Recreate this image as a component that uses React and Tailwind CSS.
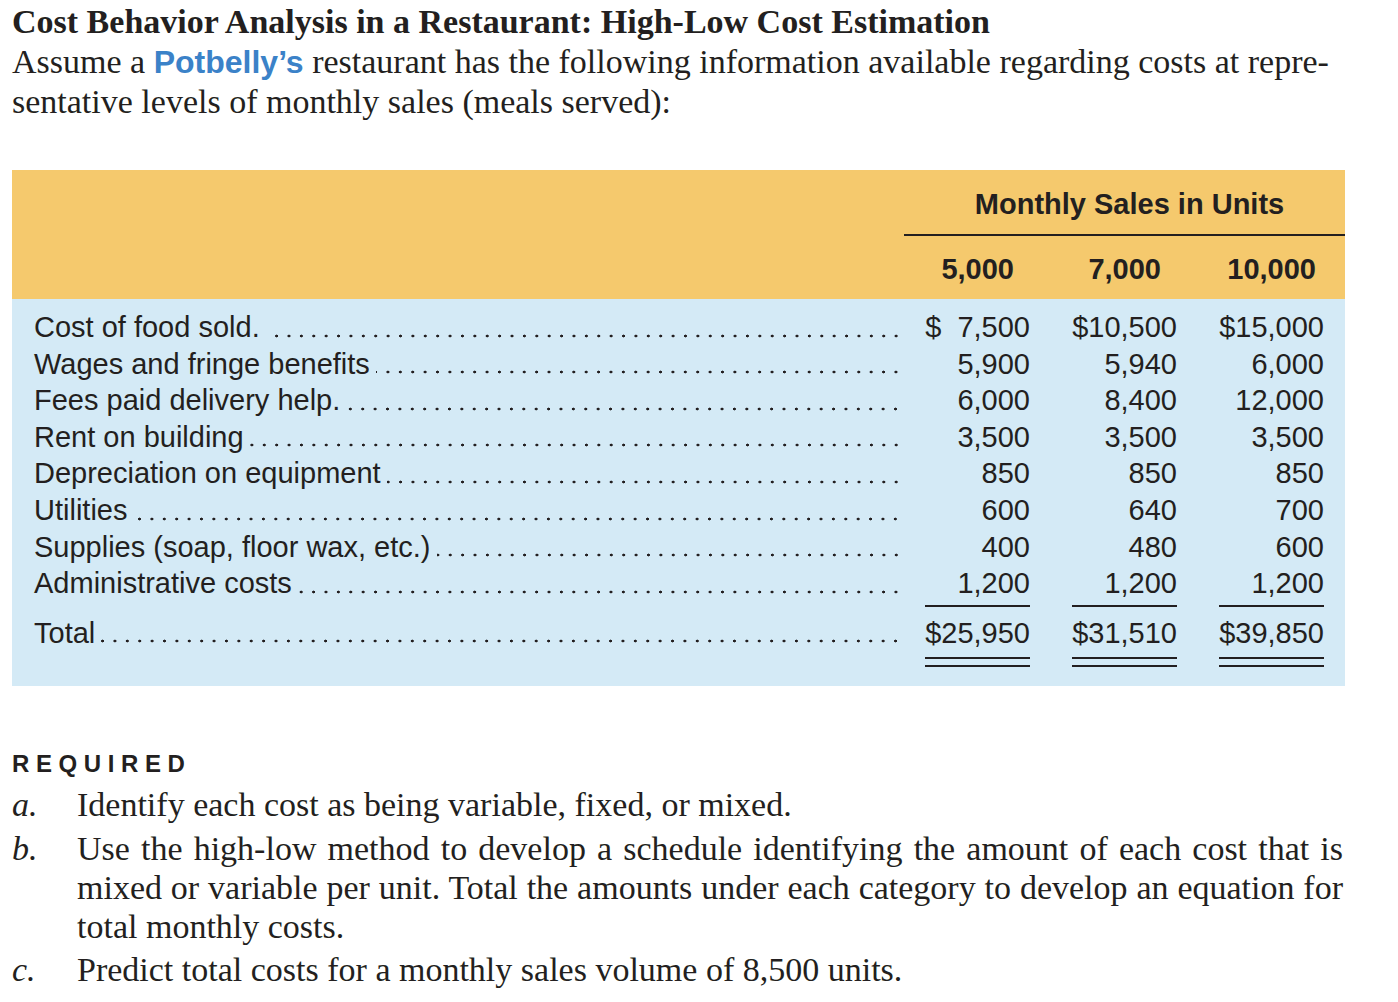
const rows = [
  { label: 'Cost of food sold.', v: ['$\u20077,500', '$10,500', '$15,000'] },
  { label: 'Wages and fringe benefits', v: ['5,900', '5,940', '6,000'] },
  { label: 'Fees paid delivery help.', v: ['6,000', '8,400', '12,000'] },
  { label: 'Rent on building', v: ['3,500', '3,500', '3,500'] },
  { label: 'Depreciation on equipment', v: ['850', '850', '850'] },
  { label: 'Utilities', v: ['600', '640', '700'] },
  { label: 'Supplies (soap, floor wax, etc.)', v: ['400', '480', '600'] },
  { label: 'Administrative costs', v: ['1,200', '1,200', '1,200'] },
];

const serif = "font-['Liberation_Serif','Times_New_Roman',serif]";
const sans = "font-['Liberation_Sans',Arial,sans-serif]";

function Leader({ label }) {
  return (
    <div className="flex flex-1 min-w-0 items-end">
      <span className="whitespace-nowrap">{label}</span>
      <div className="ml-[6px] mb-[8px] h-[4px] flex-1 bg-[radial-gradient(circle,#231f20_1.2px,transparent_1.7px)] bg-[length:12.4px_4px] bg-repeat-x bg-right" />
    </div>
  );
}

function Cells({ values }) {
  return values.map((x, i) => (
    <div key={i} className={`${i === 0 ? 'ml-[3px]' : 'ml-[22px]'} w-[125px] text-right whitespace-pre`}>
      {x}
    </div>
  ));
}

function Rules({ double }) {
  return (
    <div className="flex justify-end">
      {[0, 1, 2].map((i) => (
        <div key={i} className="ml-[22px] w-[125px] flex justify-end">
          {double ? (
            <div className="w-[105px] h-[10px] border-y-2 border-[#231f20]" />
          ) : (
            <div className="w-[105px] h-[2px] bg-[#231f20]" />
          )}
        </div>
      ))}
    </div>
  );
}

export default function App() {
  return (
    <div className="min-h-screen bg-white text-[#231f20]">
      <div className={`${serif} px-[12px] pt-[2px] text-[34px] leading-[40px]`}>
        <h1 className="font-bold">Cost Behavior Analysis in a Restaurant: High-Low Cost Estimation</h1>
        <p>
          Assume a <span className={`${sans} font-bold text-[32px] text-[#3b82c8]`}>Potbelly’s</span> restaurant has the
          following information available regarding costs at repre-
          <br />
          sentative levels of monthly sales (meals served):
        </p>
      </div>

      <div className={`${sans} mx-[12px] mt-[48px] w-[1333px] text-[29px]`}>
        <div className="bg-[#f5c96d] h-[129px] pt-[17px] font-bold">
          <div className="ml-[892px] text-center leading-[34px] pb-[13px] border-b-2 border-[#231f20] pl-[10px]">
            Monthly Sales in Units
          </div>
          <div className="flex justify-end pr-[21px] pt-[15px] leading-[36px]">
            <div className="w-[125px] text-right pr-[16px]">5,000</div>
            <div className="ml-[22px] w-[125px] text-right pr-[16px]">7,000</div>
            <div className="ml-[22px] w-[125px] text-right pr-[8px]">10,000</div>
          </div>
        </div>

        <div className="bg-[#d4eaf6] h-[387px] pl-[22px] pr-[21px] pt-[10px]">
          {rows.map((r) => (
            <div key={r.label} className="flex leading-[36.6px]">
              <Leader label={r.label} />
              <Cells values={r.v} />
            </div>
          ))}
          <div className="mt-[3px]">
            <Rules />
          </div>
          <div className="flex leading-[36.6px] mt-[8px]">
            <Leader label="Total" />
            <Cells values={['$25,950', '$31,510', '$39,850']} />
          </div>
          <div className="mt-[6px]">
            <Rules double />
          </div>
        </div>
      </div>

      <div className="px-[12px] mt-[65px]">
        <div className={`${sans} font-black text-[24px] leading-[26px] tracking-[6.6px]`}>REQUIRED</div>
        <ol className={`${serif} text-[34px] leading-[39px] mt-[8px]`}>
          <li className="flex">
            <span className="italic w-[65px] shrink-0">a.</span>
            <span>Identify each cost as being variable, fixed, or mixed.</span>
          </li>
          <li className="flex mt-[5px]">
            <span className="italic w-[65px] shrink-0">b.</span>
            <div className="w-[1266px]">
              <div className="text-justify [text-align-last:justify] whitespace-nowrap">
                Use the high-low method to develop a schedule identifying the amount of each cost that is
              </div>
              <div className="text-justify [text-align-last:justify] whitespace-nowrap">
                mixed or variable per unit. Total the amounts under each category to develop an equation for
              </div>
              <div>total monthly costs.</div>
            </div>
          </li>
          <li className="flex mt-[4px]">
            <span className="italic w-[65px] shrink-0">c.</span>
            <span>Predict total costs for a monthly sales volume of 8,500 units.</span>
          </li>
        </ol>
      </div>
    </div>
  );
}
